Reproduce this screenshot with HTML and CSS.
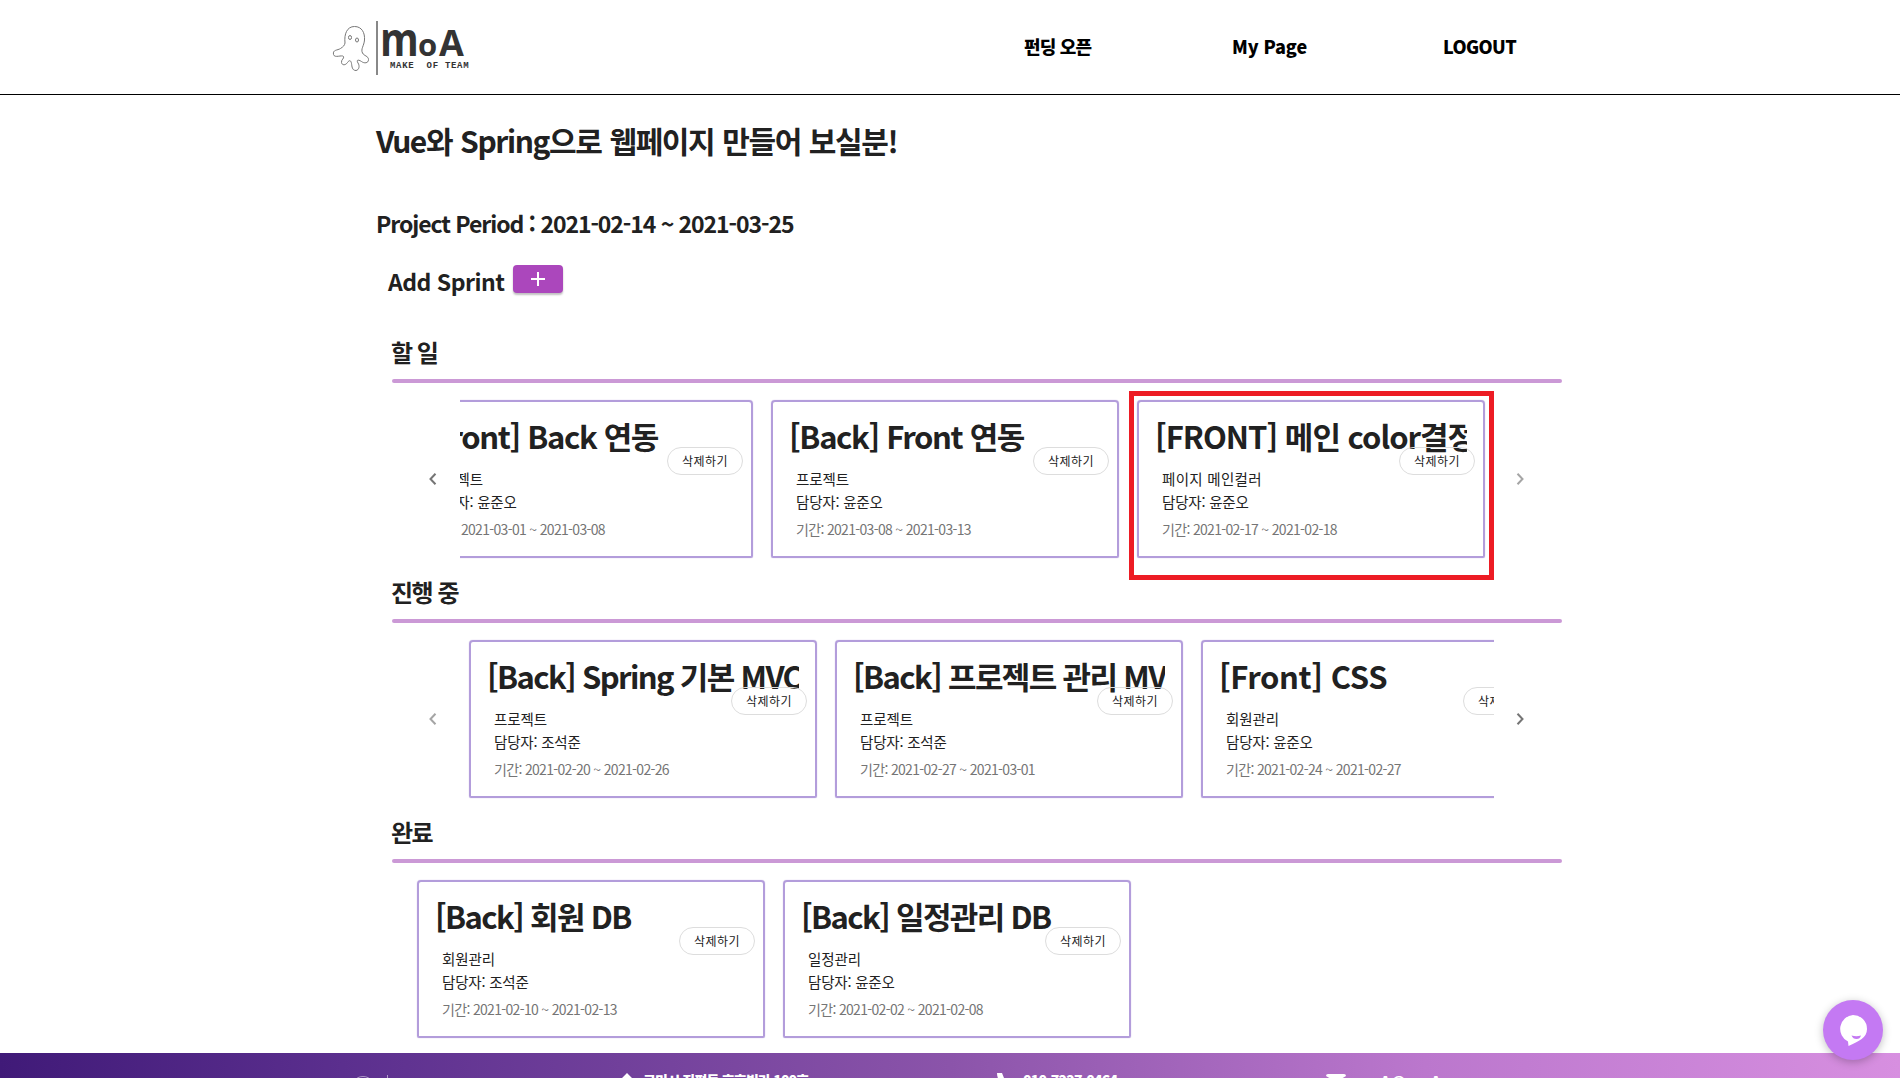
FILE: index.html
```html
<!DOCTYPE html>
<html lang="ko">
<head>
<meta charset="utf-8">
<title>MoA - Make of Team</title>
<link rel="stylesheet" href="styles.css">
</head>
<body>
<header class="topbar">
  <a class="logo">
    <svg class="octopus" width="38" height="48" viewBox="0 0 38 48"><path d="M13 20C12 11 15 3.500 22.500 3.500S33 10 32.500 17c-.5 6-4 9-2 13 1.500 3 6 3 6 6.500 0 4-4.500 4-7 2-3-2-5.500-2-3.500 1.500 2 3 1 7-2 7.500-4 0-4-4-4.500-7-.5-3-2-4-4-1-2 3-5.500 3-6 0s3-4 2-6c-1.500-2-9 2-10-2-1-5 4-4 7-6s4-3 4.500-5.500z"/><ellipse cx="18" cy="14.500" rx="1.500" ry="2"/><ellipse cx="25" cy="17" rx="1.500" ry="2"/></svg>
    <span class="logo-bar"></span>
    <span class="logo-words"><span class="logo-name"><span class="logo-m">m</span><span class="logo-o">o</span><span class="logo-a">A</span></span><span class="logo-sub">MAKE&nbsp; OF TEAM</span></span>
  </a>
  <nav class="nav">
    <a class="nav-open">펀딩 오픈</a><a class="nav-my">My Page</a><a class="nav-out">LOGOUT</a>
  </nav>
</header>
<main class="page">
  <h1>Vue와 Spring으로 웹페이지 만들어 보실분!</h1>
  <h2 class="period">Project Period : 2021-02-14 ~ 2021-03-25</h2>
  <div class="add"><h2>Add Sprint</h2><button class="add-btn"><svg width="14" height="14" viewBox="0 0 14 14"><path d="M7 0v14M0 7h14" stroke="#fff" stroke-width="2"/></svg></button></div>

  <section class="lane">
    <h3>할 일</h3>
    <div class="slider">
      <span class="arrow"><svg width="8" height="12" viewBox="0 0 8 12"><path d="M6.500 .8 1.500 6l5 5.200"/></svg></span>
      <div class="viewport"><div class="track track-end">
        <article class="card"><h4 class="t1">[Front] Back 연동</h4><button class="chip">삭제하기</button><p class="sub">프로젝트</p><p class="who">담당자: 윤준오</p><p class="when">기간: 2021-03-01 ~ 2021-03-08</p></article>
        <article class="card"><h4 class="t1">[Back] Front 연동</h4><button class="chip">삭제하기</button><p class="sub">프로젝트</p><p class="who">담당자: 윤준오</p><p class="when">기간: 2021-03-08 ~ 2021-03-13</p></article>
        <article class="card"><h4>[FRONT] 메인 color결정</h4><button class="chip">삭제하기</button><p class="sub sub-wide">페이지 메인컬러</p><p class="who">담당자: 윤준오</p><p class="when">기간: 2021-02-17 ~ 2021-02-18</p></article>
      </div></div>
      <span class="arrow off"><svg width="8" height="12" viewBox="0 0 8 12"><path d="M1.500 .8l5 5.200-5 5.200"/></svg></span>
      <div class="highlight"></div>
    </div>
  </section>

  <section class="lane">
    <h3>진행 중</h3>
    <div class="slider">
      <span class="arrow off"><svg width="8" height="12" viewBox="0 0 8 12"><path d="M6.500 .8 1.500 6l5 5.200"/></svg></span>
      <div class="viewport"><div class="track">
        <article class="card"><h4 class="tight">[Back] Spring 기본 MVC</h4><button class="chip">삭제하기</button><p class="sub">프로젝트</p><p class="who">담당자: 조석준</p><p class="when">기간: 2021-02-20 ~ 2021-02-26</p></article>
        <article class="card"><h4 class="tight">[Back] 프로젝트 관리 MVC</h4><button class="chip">삭제하기</button><p class="sub">프로젝트</p><p class="who">담당자: 조석준</p><p class="when">기간: 2021-02-27 ~ 2021-03-01</p></article>
        <article class="card"><h4 class="loose">[Front] CSS</h4><button class="chip">삭제하기</button><p class="sub">회원관리</p><p class="who">담당자: 윤준오</p><p class="when">기간: 2021-02-24 ~ 2021-02-27</p></article>
      </div></div>
      <span class="arrow"><svg width="8" height="12" viewBox="0 0 8 12"><path d="M1.500 .8l5 5.200-5 5.200"/></svg></span>
    </div>
  </section>

  <section class="lane">
    <h3>완료</h3>
    <div class="slider slider-plain">
      <div class="viewport"><div class="track">
        <article class="card"><h4 class="tight">[Back] 회원 DB</h4><button class="chip">삭제하기</button><p class="sub">회원관리</p><p class="who">담당자: 조석준</p><p class="when">기간: 2021-02-10 ~ 2021-02-13</p></article>
        <article class="card"><h4 class="tight">[Back] 일정관리 DB</h4><button class="chip">삭제하기</button><p class="sub">일정관리</p><p class="who">담당자: 윤준오</p><p class="when">기간: 2021-02-02 ~ 2021-02-08</p></article>
      </div></div>
    </div>
  </section>
</main>
<footer class="footer">
  <div class="foot-logo"><svg width="130" height="48" viewBox="0 0 130 48" fill="none" stroke="#fff"><path d="M4 20C3 8 7 1.500 15 1.500S27 8 24 20"/><path d="M39.500 0v44"/></svg></div>
  <div class="foot-item foot-home"><svg width="14" height="14" viewBox="0 0 14 14"><path d="M7 0 0 7h2v7h10V7h2z" fill="#fff"/></svg><span>구미시 진평동 호호빌라 100호</span></div>
  <div class="foot-item foot-phone"><svg width="14" height="14" viewBox="0 0 14 14"><path d="M0 0h5l2 5-2 1 3 3 2-2 4 3v4C6 14 0 8 0 0z" fill="#fff"/></svg><span>010-7227-0464</span></div>
  <div class="foot-item foot-mail"><svg width="20" height="14" viewBox="0 0 20 14"><path d="M2 0h16a2 2 0 0 1 2 2L10 8 0 2a2 2 0 0 1 2-2zM0 4l10 6 10-6v10H0z" fill="#fff"/></svg><span>moA@moA</span></div>
</footer>
<button class="chat"><svg width="60" height="60" viewBox="0 0 60 60"><path d="M30 15a14 14 0 0 1 14 14c0 9-8 12-18.500 17l-.5-4.500A14 14 0 0 1 30 15z" fill="#fff"/><path d="M28.500 35.500q5 1.500 9.500 0-1 3.500-4.500 3.500t-5-3.500z" fill="#c479f3"/></svg></button>
</body>
</html>
```
FILE: styles.css
```css
* { box-sizing: border-box; }
body {
  margin: 0;
  height: 1078px;
  overflow: hidden;
  background: #fff;
  color: #212121;
  font-family: "Noto Sans CJK KR", "Noto Sans", sans-serif;
  display: flex;
  flex-direction: column;
}
h1, h2, h3, h4, p { margin: 0; white-space: nowrap; }
button { border: 0; padding: 0; font-family: inherit; }
svg { display: block; flex: none; }

.topbar {
  height: 95px;
  flex: none;
  border-bottom: 1px solid #000;
  display: flex;
  padding-left: 332px;
}
.logo { display: flex; width: 692px; padding-top: 21px; color: #333; }
.octopus { margin-top: 2px; fill: none; stroke: #777; stroke-width: 1; }
.logo-bar { width: 2px; height: 54px; margin-left: 6px; background: #888; }
.logo-words { display: flex; flex-direction: column; margin-left: 4px; }
.logo-name { display: flex; align-items: baseline; height: 36px; line-height: 34px; font-family: "Open Sans", sans-serif; font-weight: 700; }
.logo-m { font-size: 47px; transform: scaleX(.84); transform-origin: 0 0; width: 38px; margin-left: -2px; }
.logo-o { font-size: 31px; width: 21px; }
.logo-a { font-size: 36px; width: 25px; }
.logo-sub { font: bold 9px/10px "Liberation Mono", monospace; letter-spacing: .7px; padding-left: 8px; margin-top: 4px; white-space: nowrap; }
.nav { display: flex; line-height: 92px; color: #000; font-size: 18px; font-weight: 900; white-space: nowrap; }
.nav-open { width: 208px; letter-spacing: -.8px; }
.nav-my { width: 211px; letter-spacing: -.1px; }
.nav-out { letter-spacing: -.6px; }

.page { height: 958px; flex: none; padding: 23px 0 0 376px; }
h1 { font-size: 30px; line-height: 44px; height: 44px; letter-spacing: -1.400px; word-spacing: 1px; }
h2 { font-size: 23px; line-height: 34px; }
.period { margin-top: 44px; letter-spacing: -1.070px; }
.add { display: flex; margin: 21px 0 0 12px; height: 38px; }
.add h2 { width: 125px; padding-top: 3px; letter-spacing: -.5px; }
.add-btn {
  width: 50px; height: 28px; margin-top: 4px;
  background: #ab47bc; border-radius: 4px;
  box-shadow: 0 2px 2px rgba(0,0,0,.25);
  display: flex; align-items: center; justify-content: center;
}

.lane { width: 1170px; height: 240px; margin-left: 16px; }
.add + .lane { margin-top: 35px; }
.lane h3 {
  height: 50px;
  font-size: 24px; line-height: 36px; letter-spacing: -1.500px;
  margin-left: -1px;
}
.slider { position: relative; display: flex; align-items: center; height: 190px; }
.slider::before {
  content: ""; position: absolute; left: 0; right: 0; top: -5px;
  height: 4px; border-radius: 2px; background: #cb99d6;
}
.viewport { width: 1034px; overflow: hidden; padding: 16px 0 0 9px; height: 100%; }
.arrow { width: 68px; padding-left: 37px; }
.viewport + .arrow { padding-left: 22px; }
.arrow svg { fill: none; stroke: #757575; stroke-width: 2; }
.arrow.off svg { stroke: #a5a5a5; }
.track { display: flex; gap: 18px; }
.track-end { justify-content: flex-end; padding-right: 9px; }
.slider-plain { padding-left: 16px; }
.highlight { position: absolute; left: 737px; top: 7px; width: 365px; height: 189px; border: 5px solid #ed1c24; }

.card {
  position: relative;
  width: 348px; height: 158px; flex: none;
  border: 2px solid #b39ddb; border-radius: 4px 4px 2px 2px;
  box-shadow: 0 0 1px #b39ddb;
  padding: 12px 16px 0;
}
.card h4 { font-size: 31px; line-height: 44px; height: 44px; overflow: hidden; letter-spacing: -1px; }
.card .t1 { letter-spacing: -1.350px; }
.card .tight { letter-spacing: -1.650px; }
.card .loose { letter-spacing: -.4px; }
.card p { padding-left: 7px; }
.sub, .who { font-size: 14.500px; line-height: 23px; }
.sub { margin-top: 9px; letter-spacing: -.1px; }
.sub-wide { letter-spacing: .3px; }
.who { letter-spacing: -.2px; }
.when { font-size: 14px; line-height: 20px; margin-top: 6px; color: #757575; letter-spacing: -.67px; }
.chip {
  position: absolute; right: 8px; top: 45px;
  width: 76px; height: 28px;
  border: 1px solid #ddd; border-radius: 14px;
  background: transparent; color: #212121;
  font-size: 12px; line-height: 24px; letter-spacing: .5px;
}

.footer {
  height: 60px; flex: none;
  background: linear-gradient(90deg, #401a78, #5b2f8e 18%, #8b54aa 50%, #bb77cd 75%, #d78fe0);
  display: flex; padding-top: 20px; color: #fff;
}
.foot-logo { width: 620px; padding: 2px 0 0 348px; opacity: .5; }
.foot-item { display: flex; font-size: 14px; font-weight: 900; line-height: 14px; white-space: nowrap; }
.foot-home { width: 377px; gap: 9px; }
.foot-phone { width: 329px; gap: 12px; }
.foot-mail { gap: 10px; padding-top: 1px; }
.foot-phone span { letter-spacing: -.8px; }
.foot-home span { letter-spacing: -.8px; }
.foot-mail span { letter-spacing: 1px; line-height: 14px; }

.chat {
  position: absolute; left: 1823px; top: 1000px;
  width: 60px; height: 60px; border-radius: 50%;
  background: #c479f3; box-shadow: 0 2px 8px rgba(0,0,0,.25);
}
```
